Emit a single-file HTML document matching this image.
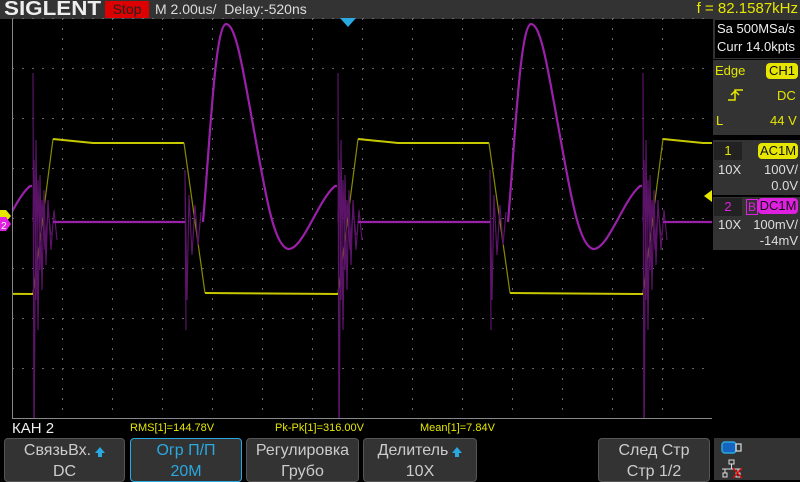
<!DOCTYPE html>
<html><head><meta charset="utf-8">
<style>
body{margin:0;width:800px;height:480px;background:#000;overflow:hidden;font-family:"Liberation Sans","Noto Sans CJK SC",sans-serif;position:relative}
.a{position:absolute}
.top{left:0;top:0;width:800px;height:19px;background:#333}
.btn{position:absolute;top:438px;height:44px;background:#333;border:1px solid #555;border-radius:4px;box-sizing:border-box;color:#ccc;font-size:16px;text-align:center;line-height:21px;padding-top:1px}
.up{display:inline-block;width:0;height:0;border-left:5px solid transparent;border-right:5px solid transparent;border-bottom:6px solid #2aa8e0;position:relative;top:-2px;margin-left:4px}
.up:after{content:"";position:absolute;left:-2px;top:6px;width:4px;height:4px;background:#2aa8e0}
</style></head><body>
<div class="a top"></div>
<div class="a" style="left:4px;top:-2px;color:#eee;font-weight:bold;font-size:20px;transform:scaleX(1.12);transform-origin:left">SIGLENT</div>
<div class="a" style="left:105px;top:1px;width:44px;height:17px;background:#d00;color:#222;font-size:14px;line-height:17px;text-align:center">Stop</div>
<div class="a" style="left:155px;top:1px;color:#ddd;font-size:14px;line-height:17px">M 2.00us/&nbsp; Delay:-520ns</div>
<div class="a" style="right:2px;top:0px;color:#e6e600;font-size:15px;line-height:18px">f = 82.1587kHz</div>

<svg class="a" style="left:0;top:0" width="800" height="480">
<defs>
<pattern id="vg" x="12" y="18" width="50" height="10" patternUnits="userSpaceOnUse"><rect x="0" y="0" width="1" height="2" fill="#666"/></pattern>
<pattern id="hg" x="12" y="18" width="10" height="50" patternUnits="userSpaceOnUse"><rect x="0" y="0" width="2" height="1" fill="#666"/></pattern>
<clipPath id="cp"><rect x="13" y="19" width="699" height="399"/></clipPath>
<g id="py">
<path d="M0,293 L20,139" fill="none" stroke="#8a8a00" stroke-width="1.2"/>
<path d="M20,139 L40,141 L60,143 L151,143" fill="none" stroke="#c8c800" stroke-width="2"/>
<path d="M151,143 L172,293" fill="none" stroke="#8a8a00" stroke-width="1.2"/>
<path d="M172,293 L305,294" fill="none" stroke="#c8c800" stroke-width="2"/>
</g>
<g id="pp">
<path d="M0,222 L1,160 L3,300 L5,180 L7,270 L9,200 L12,250 L15,210 L18,235 M152,175 L154,300 L156,195 L159,255 L162,205 L165,245 L168,212 M305,73 L306,460 L308,140 L310,330 L312,175 L314,290 L316,190 L318,265 L320,200 L323,250 L326,210 L329,240 M152,170 L153,330" fill="none" stroke="#5c1468" stroke-width="1.2"/>
<path d="M20,222 L152,222 M170,222 C177,140 182,26 193,24 C203,24 210,70 220,125 C232,190 240,245 255,249 C270,250 285,200 302,186 L304,186" fill="none" stroke="#9a20aa" stroke-width="2.2"/>
</g>
</defs>
<rect x="12" y="18" width="700" height="400" fill="url(#vg)"/>
<rect x="12" y="18" width="700" height="400" fill="url(#hg)"/>
<line x1="12.5" y1="19" x2="12.5" y2="419" stroke="#888"/>
<line x1="12" y1="418.5" x2="712" y2="418.5" stroke="#888"/>
<g clip-path="url(#cp)">
<use href="#py" x="-272"/><use href="#py" x="33"/><use href="#py" x="338"/><use href="#py" x="643"/>
<use href="#pp" x="-272"/><use href="#pp" x="33"/><use href="#pp" x="338"/><use href="#pp" x="643"/>
</g>
<polygon points="340,18 356,18 348,27" fill="#2aa8e0"/>
<polygon points="0,210 6,210 11,216 6,222 0,222" fill="#e6e600"/>
<polygon points="0,217 6,217 11,224 6,231 0,231" fill="#e020e0"/>
<text x="1" y="229" font-size="10" fill="#fff" font-family="Liberation Sans">2</text>
<polygon points="712,190 712,202 704,196" fill="#e6e600"/>
</svg>

<!-- right panel -->
<div class="a" style="left:712px;top:19px;width:88px;height:400px;background:#000"></div>
<div class="a" style="left:713px;top:19px;width:87px;height:40px;background:#333"></div>
<div class="a" style="left:715px;top:20px;width:85px;height:38px;background:#000;color:#eee;font-size:13px;line-height:18px;padding-left:2px">Sa 500MSa/s<br>Curr 14.0kpts</div>
<div class="a" style="left:713px;top:60px;width:87px;height:75px;background:#333"></div>
<div class="a" style="left:715px;top:63px;color:#e6e600;font-size:13px">Edge</div>
<div class="a" style="left:766px;top:63px;width:32px;height:16px;background:#e6e600;border-radius:4px;color:#111;font-size:13px;text-align:center;line-height:16px">CH1</div>
<svg class="a" style="left:728px;top:88px" width="16" height="14"><path d="M0,12 H7 V2 H15 M3,7 L7,3 L11,7" stroke="#e6e600" stroke-width="1.5" fill="none"/></svg>
<div class="a" style="left:777px;top:88px;color:#e6e600;font-size:13px">DC</div>
<div class="a" style="left:716px;top:113px;color:#e6e600;font-size:13px">L</div>
<div class="a" style="left:770px;top:113px;color:#e6e600;font-size:13px">44 V</div>
<div class="a" style="left:713px;top:140px;width:87px;height:55px;background:#333"></div>
<div class="a" style="left:714px;top:142px;width:28px;height:18px;background:#222;color:#e6e600;font-size:13px;text-align:center;line-height:18px">1</div>
<div class="a" style="left:758px;top:143px;width:40px;height:16px;background:#e6e600;border-radius:4px;color:#111;font-size:13px;text-align:center;line-height:16px">AC1M</div>
<div class="a" style="left:718px;top:162px;color:#ddd;font-size:13px">10X</div>
<div class="a" style="right:2px;top:162px;color:#ddd;font-size:13px;text-align:right;line-height:16px">100V/<br>0.0V</div>
<div class="a" style="left:713px;top:197px;width:87px;height:53px;background:#333"></div>
<div class="a" style="left:714px;top:198px;width:28px;height:18px;background:#222;color:#e020e0;font-size:13px;text-align:center;line-height:18px">2</div>
<div class="a" style="left:746px;top:199px;width:10px;height:14px;border:1px solid #e020e0;color:#e020e0;font-size:12px;line-height:14px;text-align:center">B</div>
<div class="a" style="left:758px;top:198px;width:40px;height:16px;background:#e020e0;border-radius:4px;color:#111;font-size:13px;text-align:center;line-height:16px">DC1M</div>
<div class="a" style="left:718px;top:217px;color:#ddd;font-size:13px">10X</div>
<div class="a" style="right:2px;top:217px;color:#ddd;font-size:13px;text-align:right;line-height:16px">100mV/<br>-14mV</div>

<!-- bottom -->
<div class="a" style="left:12px;top:420px;color:#eee;font-size:15px">КАН 2</div>
<div class="a" style="left:130px;top:422px;color:#e6e600;font-size:11px;font-family:'Liberation Sans Narrow','Liberation Sans',sans-serif">RMS[1]=144.78V</div>
<div class="a" style="left:275px;top:422px;color:#e6e600;font-size:11px;font-family:'Liberation Sans Narrow','Liberation Sans',sans-serif">Pk-Pk[1]=316.00V</div>
<div class="a" style="left:420px;top:422px;color:#e6e600;font-size:11px;font-family:'Liberation Sans Narrow','Liberation Sans',sans-serif">Mean[1]=7.84V</div>
<div class="btn" style="left:4px;width:121px">СвязьВх.<span class="up"></span><br>DC</div>
<div class="btn" style="left:130px;width:112px;border-color:#2aa8e0;color:#2aa8e0">Огр П/П<br>20M</div>
<div class="btn" style="left:246px;width:113px">Регулировка<br>Грубо</div>
<div class="btn" style="left:363px;width:114px">Делитель<span class="up"></span><br>10X</div>
<div class="btn" style="left:598px;width:112px">След Стр<br>Стр 1/2</div>
<div class="a" style="left:714px;top:438px;width:86px;height:42px;background:#333"></div>
<svg class="a" style="left:720px;top:440px" width="40" height="40">
<rect x="2" y="2" width="14" height="11" rx="3" fill="#1565c0" stroke="#2aa8e0" stroke-width="1.5"/>
<rect x="16" y="4" width="5" height="7" fill="none" stroke="#ddd" stroke-width="1.2"/>
<rect x="9" y="20" width="5" height="4" fill="none" stroke="#ddd"/>
<path d="M11.5,24 V29 M2,29 H22 M5,29 V33 M18,29 V33" stroke="#ddd" fill="none"/>
<rect x="3" y="33" width="4" height="4" fill="none" stroke="#ddd"/>
<rect x="16" y="33" width="4" height="4" fill="none" stroke="#ddd"/>
<path d="M13,28 L22,38 M22,28 L13,38" stroke="#e00" stroke-width="1.3"/>
</svg>
</body></html>
